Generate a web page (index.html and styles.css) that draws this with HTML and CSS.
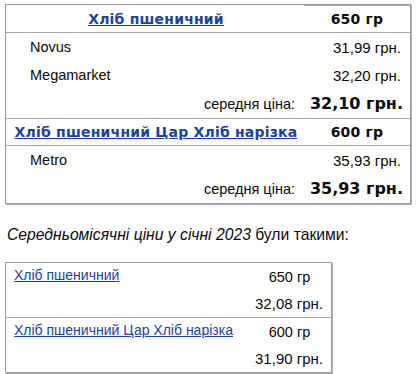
FILE: index.html
```html
<!DOCTYPE html>
<html lang="uk">
<head>
<meta charset="utf-8">
<link rel="stylesheet" href="styles.css">
</head>
<body>
<table class="prices">
  <colgroup><col><col class="c-weight"></colgroup>
  <tr class="head">
    <th class="name first"><a href="#">Хліб пшеничний</a></th>
    <th class="weight">650 гр</th>
  </tr>
  <tr class="store first-row">
    <td class="shop">Novus</td>
    <td class="price">31,99 грн.</td>
  </tr>
  <tr class="store">
    <td class="shop">Megamarket</td>
    <td class="price">32,20 грн.</td>
  </tr>
  <tr class="avg">
    <td class="avg-label">середня ціна:</td>
    <td class="avg-price">32,10 грн.</td>
  </tr>
  <tr class="head">
    <th class="name"><a href="#">Хліб пшеничний Цар Хліб нарізка</a></th>
    <th class="weight">600 гр</th>
  </tr>
  <tr class="store first-row">
    <td class="shop">Metro</td>
    <td class="price">35,93 грн.</td>
  </tr>
  <tr class="avg">
    <td class="avg-label">середня ціна:</td>
    <td class="avg-price">35,93 грн.</td>
  </tr>
</table>

<p class="note"><em>Середньомісячні ціни у січні 2023</em> були такими:</p>

<table class="monthly">
  <tr class="item-top">
    <td class="item-name" rowspan="2"><a href="#">Хліб пшеничний</a></td>
    <td class="item-weight">650 гр</td>
  </tr>
  <tr>
    <td class="item-price">32,08 грн.</td>
  </tr>
  <tr class="item-top sep">
    <td class="item-name" rowspan="2"><a href="#">Хліб пшеничний Цар Хліб нарізка</a></td>
    <td class="item-weight">600 гр</td>
  </tr>
  <tr>
    <td class="item-price">31,90 грн.</td>
  </tr>
</table>
</body>
</html>
```

FILE: styles.css
```css
html, body {
  margin: 0;
  background: #fff;
}
body {
  padding: 4px 5px;
  font-family: "Liberation Sans", Arial, sans-serif;
  font-size: 14.5px;
  color: #0a0a0a;
}
a {
  color: #1a449c;
  text-decoration: underline;
}

.prices {
  width: 406px;
  border-collapse: separate;
  border-spacing: 0;
  border: 1px solid #9a9a9a;
  box-shadow: 1px 1px 0 #b0b0b0;
}
.prices .c-weight {
  width: 106px;
}
.prices td, .prices th {
  padding: 0;
}
.prices .head th {
  height: 26px;
  font-family: "DejaVu Sans", Verdana, sans-serif;
  font-weight: bold;
  font-size: 14px;
  letter-spacing: 0.2px;
  text-align: center;
  border-top: 1px solid #a8a8a8;
  white-space: nowrap;
}
.prices .head th.first {
  border-top: 0;
}
.prices .head th.name {
  padding: 0 6px 0 8px;
}
.prices .first-row td {
  border-top: 1px solid #a8a8a8;
}
.prices .store td {
  height: 28px;
}
.prices .shop {
  padding-left: 24px;
}
.prices .price {
  text-align: right;
  padding-right: 9px;
  font-size: 15px;
}
.prices .avg td {
  height: 29px;
}
.prices .avg-label {
  text-align: right;
  padding-right: 9px;
}
.prices .avg-price {
  text-align: right;
  padding-right: 7px;
  font-family: "DejaVu Sans", Verdana, sans-serif;
  font-weight: bold;
  font-size: 16px;
}

.note {
  margin: 22px 0 18px 2px;
  font-size: 15.7px;
  line-height: 18px;
}

.monthly {
  width: 327px;
  border-collapse: separate;
  border-spacing: 0;
  border: 1px solid #9a9a9a;
  box-shadow: 1px 1px 0 #b0b0b0;
}
.monthly td {
  padding: 0;
  height: 27px;
}
.monthly .item-name {
  vertical-align: top;
  padding: 4px 8px 0 8px;
  height: auto;
  font-size: 14px;
  white-space: nowrap;
}
.monthly .sep td {
  border-top: 1px solid #a8a8a8;
}
.monthly .item-weight {
  width: 83px;
  text-align: center;
}
.monthly .item-price {
  text-align: right;
  padding-right: 8px;
  font-size: 15px;
}
```
